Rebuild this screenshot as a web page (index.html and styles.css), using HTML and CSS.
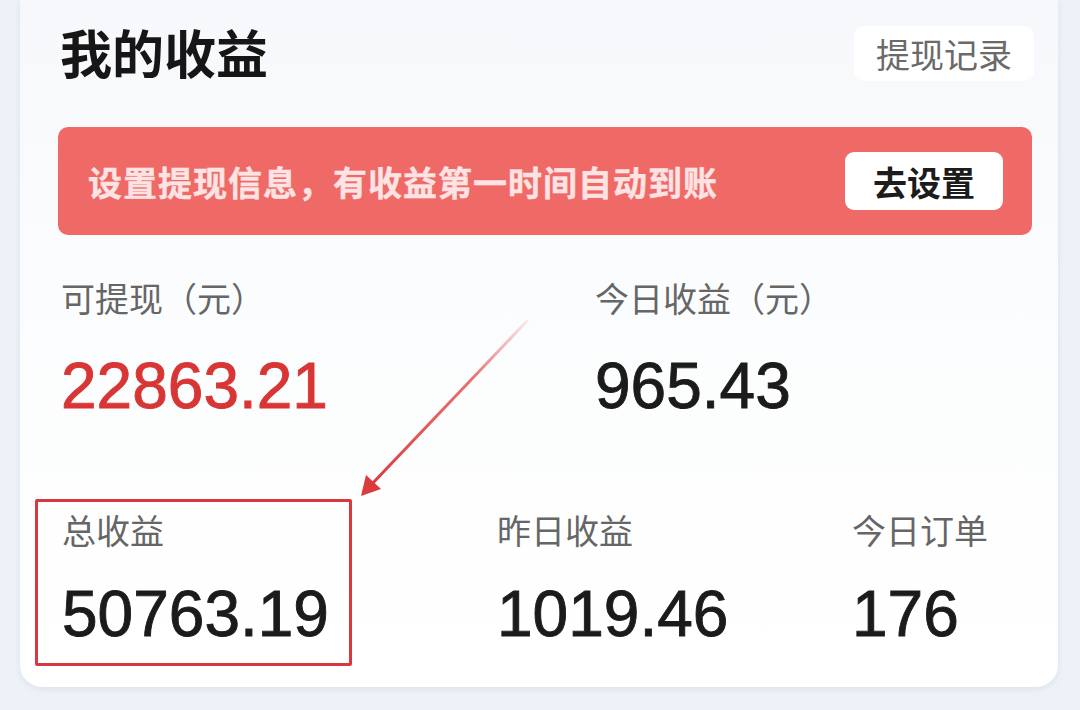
FILE: index.html
```html
<!DOCTYPE html>
<html lang="zh-CN">
<head>
<meta charset="utf-8">
<title>我的收益</title>
<link rel="stylesheet" href="styles.css">
</head>
<body>
<div class="page">
  <div class="card">
    <div class="header">
      <h1 class="title">我的收益</h1>
      <div class="record-btn">提现记录</div>
    </div>
    <div class="banner">
      <span class="banner-text">设置提现信息，有收益第一时间自动到账</span>
      <span class="banner-btn">去设置</span>
    </div>
    <div class="row row-top">
      <div class="stat">
        <div class="label">可提现（元）</div>
        <div class="value value-red">22863.21</div>
      </div>
      <div class="stat">
        <div class="label">今日收益（元）</div>
        <div class="value">965.43</div>
      </div>
    </div>
    <div class="row row-bottom">
      <div class="stat stat-boxed">
        <div class="label">总收益</div>
        <div class="value">50763.19</div>
      </div>
      <div class="stat stat-pad">
        <div class="label">昨日收益</div>
        <div class="value">1019.46</div>
      </div>
      <div class="stat stat-pad">
        <div class="label">今日订单</div>
        <div class="value">176</div>
      </div>
    </div>
    <svg class="arrow" width="200" height="190" viewBox="0 0 200 190">
      <defs>
        <linearGradient id="fade" x1="1" y1="0" x2="0" y2="1">
          <stop offset="0" stop-color="#e24a4a" stop-opacity="0.1"/>
          <stop offset="0.35" stop-color="#e04444" stop-opacity="0.75"/>
          <stop offset="1" stop-color="#db3b3b" stop-opacity="1"/>
        </linearGradient>
      </defs>
      <line x1="184" y1="8" x2="28" y2="172" stroke="url(#fade)" stroke-width="3" stroke-linecap="round"/>
      <polygon points="18,183 23,162 38,176" fill="#db3b3b"/>
    </svg>
  </div>
</div>
</body>
</html>
```
FILE: styles.css
```css
* { box-sizing: border-box; }
html, body {
  margin: 0;
  padding: 0;
  background: #eef2f8;
}
body {
  width: 1080px;
  height: 710px;
  overflow: hidden;
  font-family: "Noto Sans CJK SC", "Noto Sans", sans-serif;
}
.page {
  padding: 0 22px 0 20px;
}
.card {
  position: relative;
  height: 687px;
  background: linear-gradient(180deg, #f6f8fb 0%, #fbfcfd 40%, #ffffff 100%);
  border-radius: 0 0 22px 22px;
  box-shadow: 0 2px 6px rgba(180, 195, 215, 0.35);
  padding: 25px 26px 0 38px;
}
.header {
  display: flex;
  align-items: center;
  justify-content: space-between;
  height: 56px;
}
.title {
  margin: -2px 0 0 2px;
  font-size: 52px;
  line-height: 52px;
  font-weight: 700;
  color: #161616;
}
.record-btn {
  margin-right: -2px;
  background: #ffffff;
  border-radius: 10px;
  width: 180px;
  height: 55px;
  display: flex;
  align-items: center;
  justify-content: center;
  font-size: 34px;
  color: #6a6a6a;
}
.banner {
  margin-top: 46px;
  height: 108px;
  background: #ef6a67;
  border-radius: 10px;
  display: flex;
  align-items: center;
  justify-content: space-between;
  padding: 0 29px 0 30px;
}
.banner-text {
  font-size: 34px;
  font-weight: 700;
  color: #fde3e3;
  letter-spacing: 1px;
  -webkit-text-stroke: 0.4px #fde3e3;
}
.banner-btn {
  width: 158px;
  height: 58px;
  background: #ffffff;
  border-radius: 9px;
  display: flex;
  align-items: center;
  justify-content: center;
  font-size: 34px;
  font-weight: 700;
  color: #1c1c1c;
}
.row {
  display: grid;
}
.row-top {
  margin-top: 46px;
  grid-template-columns: 534px 1fr;
  padding-left: 3px;
}
.row-bottom {
  margin-top: 81px;
  margin-left: -23px;
  grid-template-columns: 462px 355px 1fr;
  align-items: start;
}
.label {
  font-size: 34px;
  line-height: 34px;
  color: #666666;
}
.value {
  font-family: "Liberation Sans", Arial, sans-serif;
  font-size: 64px;
  line-height: 64px;
  color: #1b1b1b;
  -webkit-text-stroke: 0.9px #1b1b1b;
  margin-top: 39px;
}
.value-red {
  color: #d83535;
  -webkit-text-stroke: 0.9px #d83535;
}
.row-bottom .value {
  margin-top: 35px;
}
.stat-boxed {
  width: 317px;
  border: 3px solid #d9393e;
  border-radius: 2px;
  padding: 11px 10px 17px 24px;
}
.stat-pad {
  padding-top: 14px;
}
.arrow {
  position: absolute;
  left: 323px;
  top: 313px;
}
```
